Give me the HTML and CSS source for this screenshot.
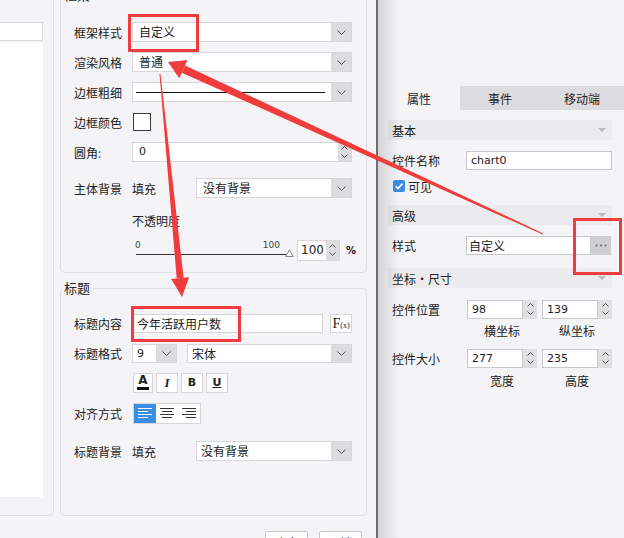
FILE: index.html
```html
<!DOCTYPE html>
<html lang="zh">
<head>
    <meta charset="UTF-8">
    <title>图表样式</title>
    <link rel="stylesheet" href="styles.css">
</head>
<body>
<div class="app">
    <div class="dialog">
        <div class="dialog-body">
            <div class="preview">
                <div class="preview-bar"></div>
                <div class="preview-canvas"></div>
            </div>
            <div class="settings">
                <div class="group group-frame">
                    <span class="legend">框架</span>
                    <div class="row">
                        <span class="lbl">框架样式</span>
                        <div class="select"><span class="val">自定义</span><i class="drop"><svg width="9" height="5" viewBox="0 0 9 5"><path d="M.5.5l4 4 4-4" fill="none" stroke="#555"/></svg></i></div>
                    </div>
                    <div class="row">
                        <span class="lbl">渲染风格</span>
                        <div class="select"><span class="val">普通</span><i class="drop"><svg width="9" height="5" viewBox="0 0 9 5"><path d="M.5.5l4 4 4-4" fill="none" stroke="#555"/></svg></i></div>
                    </div>
                    <div class="row">
                        <span class="lbl">边框粗细</span>
                        <div class="select"><span class="val line-val"><b class="line"></b></span><i class="drop"><svg width="9" height="5" viewBox="0 0 9 5"><path d="M.5.5l4 4 4-4" fill="none" stroke="#555"/></svg></i></div>
                    </div>
                    <div class="row">
                        <span class="lbl">边框颜色</span>
                        <div class="swatch"></div>
                    </div>
                    <div class="row">
                        <span class="lbl">圆角<em class="colon">:</em></span>
                        <div class="select"><span class="val num-val">0</span><i class="spin"><svg width="7" height="4" viewBox="0 0 7 4"><path d="M.5 3.5l3-3 3 3" fill="none" stroke="#555"/></svg><svg width="7" height="4" viewBox="0 0 7 4"><path d="M.5.5l3 3 3-3" fill="none" stroke="#555"/></svg></i></div>
                    </div>
                    <div class="row row-bg">
                        <span class="lbl">主体背景</span>
                        <span class="fill">填充</span>
                        <div class="select"><span class="val">没有背景</span><i class="drop"><svg width="9" height="5" viewBox="0 0 9 5"><path d="M.5.5l4 4 4-4" fill="none" stroke="#555"/></svg></i></div>
                    </div>
                    <div class="row row-sub">不透明度</div>
                    <div class="row row-sub">
                        <div class="slider">
                            <div class="scale"><span>0</span><span>100</span></div>
                            <div class="track"></div>
                            <svg class="thumb" width="9" height="8" viewBox="0 0 9 8"><path d="M4.5.8L8.3 7.5H.7z" fill="#fff" stroke="#888"/></svg>
                        </div>
                        <div class="select opacity"><span class="val num-val">100</span><i class="spin"><svg width="7" height="4" viewBox="0 0 7 4"><path d="M.5 3.5l3-3 3 3" fill="none" stroke="#555"/></svg><svg width="7" height="4" viewBox="0 0 7 4"><path d="M.5.5l3 3 3-3" fill="none" stroke="#555"/></svg></i></div>
                        <span class="pct">%</span>
                    </div>
                </div>

                <div class="group group-title">
                    <span class="legend">标题</span>
                    <div class="row">
                        <span class="lbl">标题内容</span>
                        <div class="select"><span class="val">今年活跃用户数</span></div>
                        <span class="fx">F<small>(x)</small></span>
                    </div>
                    <div class="row">
                        <span class="lbl">标题格式</span>
                        <div class="select size"><span class="val num-val">9</span><i class="drop"><svg width="9" height="5" viewBox="0 0 9 5"><path d="M.5.5l4 4 4-4" fill="none" stroke="#555"/></svg></i></div>
                        <div class="select"><span class="val">宋体</span><i class="drop"><svg width="9" height="5" viewBox="0 0 9 5"><path d="M.5.5l4 4 4-4" fill="none" stroke="#555"/></svg></i></div>
                    </div>
                    <div class="row row-sub">
                        <div class="fmt">
                            <span class="fbtn fa">A<b></b></span>
                            <span class="fbtn fi">I</span>
                            <span class="fbtn fb">B</span>
                            <span class="fbtn fu">U</span>
                        </div>
                    </div>
                    <div class="row">
                        <span class="lbl">对齐方式</span>
                        <div class="align">
                            <span class="abtn on"><svg width="14" height="11" viewBox="0 0 14 11"><path d="M0 .5h14M0 3.5h10M0 6.5h14M0 9.5h10" stroke="#fff"/></svg></span>
                            <span class="abtn"><svg width="14" height="11" viewBox="0 0 14 11"><path d="M0 .5h14M2 3.5h10M0 6.5h14M2 9.5h10" stroke="#333"/></svg></span>
                            <span class="abtn"><svg width="14" height="11" viewBox="0 0 14 11"><path d="M0 .5h14M4 3.5h10M0 6.5h14M4 9.5h10" stroke="#333"/></svg></span>
                        </div>
                    </div>
                    <div class="row row-bg row-gap">
                        <span class="lbl">标题背景</span>
                        <span class="fill">填充</span>
                        <div class="select"><span class="val">没有背景</span><i class="drop"><svg width="9" height="5" viewBox="0 0 9 5"><path d="M.5.5l4 4 4-4" fill="none" stroke="#555"/></svg></i></div>
                    </div>
                </div>
            </div>
        </div>
        <div class="dialog-foot">
            <button class="btn">确定</button>
            <button class="btn">取消</button>
        </div>
    </div>

    <div class="side">
        <div class="tabs">
            <span class="tab on">属性</span>
            <span class="tab">事件</span>
            <span class="tab last">移动端</span>
        </div>
        <div class="props">
            <div class="phead">基本<i class="caret"></i></div>
            <div class="prow">
                <span class="plabel">控件名称</span>
                <span class="pinput">chart0</span>
            </div>
            <div class="prow check-row">
                <svg width="12" height="12" viewBox="0 0 12 12"><rect width="12" height="12" rx="2" fill="#3b8de0"/><path d="M2.5 6.2l2.4 2.4 4.6-5" fill="none" stroke="#fff" stroke-width="1.6"/></svg>
                <span>可见</span>
            </div>
            <div class="phead gap">高级<i class="caret"></i></div>
            <div class="prow">
                <span class="plabel">样式</span>
                <span class="pinput cn">自定义</span>
                <span class="more"><svg width="12" height="3" viewBox="0 0 12 3"><circle cx="1.5" cy="1.5" r="1" fill="#666"/><circle cx="6" cy="1.5" r="1" fill="#666"/><circle cx="10.5" cy="1.5" r="1" fill="#666"/></svg></span>
            </div>
            <div class="phead gap">坐标・尺寸<i class="caret"></i></div>
            <div class="prow pos">
                <span class="plabel wide">控件位置</span>
                <div class="num"><span class="pinput">98</span><i class="spin"><svg width="7" height="4" viewBox="0 0 7 4"><path d="M.5 3.5l3-3 3 3" fill="none" stroke="#555"/></svg><svg width="7" height="4" viewBox="0 0 7 4"><path d="M.5.5l3 3 3-3" fill="none" stroke="#555"/></svg></i></div>
                <div class="num"><span class="pinput">139</span><i class="spin"><svg width="7" height="4" viewBox="0 0 7 4"><path d="M.5 3.5l3-3 3 3" fill="none" stroke="#555"/></svg><svg width="7" height="4" viewBox="0 0 7 4"><path d="M.5.5l3 3 3-3" fill="none" stroke="#555"/></svg></i></div>
            </div>
            <div class="caption"><span>横坐标</span><span>纵坐标</span></div>
            <div class="prow size-row">
                <span class="plabel wide">控件大小</span>
                <div class="num"><span class="pinput">277</span><i class="spin"><svg width="7" height="4" viewBox="0 0 7 4"><path d="M.5 3.5l3-3 3 3" fill="none" stroke="#555"/></svg><svg width="7" height="4" viewBox="0 0 7 4"><path d="M.5.5l3 3 3-3" fill="none" stroke="#555"/></svg></i></div>
                <div class="num"><span class="pinput">235</span><i class="spin"><svg width="7" height="4" viewBox="0 0 7 4"><path d="M.5 3.5l3-3 3 3" fill="none" stroke="#555"/></svg><svg width="7" height="4" viewBox="0 0 7 4"><path d="M.5.5l3 3 3-3" fill="none" stroke="#555"/></svg></i></div>
            </div>
            <div class="caption cap2"><span>宽度</span><span>高度</span></div>
        </div>
    </div>
</div>

<!-- annotation layer: red boxes and arrows drawn over the screenshot -->
<svg class="marks" width="624" height="538" viewBox="0 0 624 538">
    <g fill="none" stroke="#f03c3c" stroke-width="3">
        <rect x="129.5" y="15.5" width="68" height="35"/>
        <rect x="132.5" y="307.5" width="107" height="33"/>
        <rect x="574.5" y="219.5" width="46" height="54"/>
    </g>
    <g fill="#f03c3c">
        <polygon points="185.1,65.5 543.3,233.4 542.7,234.6 181.8,72.7"/>
        <polygon points="168,62 187.6,60 179.3,78.2"/>
        <polygon points="159.5,74 160.5,74 183.6,277.8 176.7,278.4"/>
        <polygon points="182,297 171.2,279 189.1,277.2"/>
    </g>
</svg>
</body>
</html>
```

FILE: styles.css
```css
* {
    box-sizing: border-box;
}

body {
    margin: 0;
    width: 624px;
    height: 538px;
    overflow: hidden;
    position: relative;
    background: #f4f4f6;
    font-family: "Noto Sans CJK SC", "Noto Sans", sans-serif;
    font-size: 12px;
    color: #222;
}

.app {
    display: flex;
    height: 538px;
}

/* dialog */
.dialog {
    flex: none;
    width: 376px;
    display: flex;
    flex-direction: column;
}

.dialog-body {
    flex: none;
    display: flex;
    height: 516px;
}

.preview {
    flex: none;
    width: 54px;
    padding-top: 22px;
    border-right: 1px solid #e0e0e4;
    border-bottom: 1px solid #e0e0e4;
    border-bottom-right-radius: 5px;
}

.preview-bar {
    width: 43px;
    height: 19px;
    background: #fff;
    border: 1px solid #d8d8dc;
    border-left: 0;
}

.preview-canvas {
    width: 43px;
    height: 454px;
    margin-top: 2px;
    background: #fff;
}

.settings {
    flex: 1;
    min-width: 0;
    display: flex;
    flex-direction: column;
    padding: 0 9px 0 6px;
}

.group {
    position: relative;
    border: 1px solid #e0e0e4;
    border-radius: 5px;
    padding: 0 14px 0 13px;
}

.group-frame {
    flex: none;
    margin-top: -5px;
    padding-top: 21px;
    padding-bottom: 7px;
}

.group-title {
    flex: 1;
    margin-top: 15px;
    padding-top: 19px;
}

.legend {
    position: absolute;
    top: -8px;
    left: 1px;
    padding: 0 2px;
    background: #f4f4f6;
    font-size: 13px;
    line-height: 14px;
}

.row {
    display: flex;
    align-items: center;
    height: 30px;
}

.row-bg {
    margin-top: 6px;
}

.row-gap {
    margin-top: 8px;
}

.row-sub {
    padding-left: 58px;
}

.group-frame .row-sub {
    margin-top: 2px;
}

.group-frame .row-sub + .row-sub {
    margin-top: 0;
}

.lbl {
    width: 58px;
    flex: none;
    white-space: nowrap;
}

.colon {
    font-style: normal;
    color: #80408a;
}

.fill {
    width: 64px;
    flex: none;
}

.select {
    flex: 1;
    min-width: 0;
    display: flex;
    height: 20px;
    background: #fff;
    border: 1px solid #d7d7db;
}

.select .val {
    flex: 1;
    padding-left: 6px;
    line-height: 18px;
    white-space: nowrap;
    overflow: hidden;
}

.num-val {
    font-family: "DejaVu Sans", sans-serif;
    font-size: 11px;
}

.line-val {
    display: flex;
    align-items: center;
    padding-left: 3px !important;
}

.line {
    flex: 1;
    height: 1px;
    margin-right: 6px;
    background: #111;
}

.drop {
    flex: none;
    width: 20px;
    display: flex;
    align-items: center;
    justify-content: center;
    background: #dcdcdf;
}

.spin {
    flex: none;
    width: 13px;
    display: flex;
    flex-direction: column;
    align-items: center;
    justify-content: space-evenly;
    background: #dcdcdf;
}

.swatch {
    width: 18px;
    height: 18px;
    margin-left: 1px;
    background: #fff;
    border: 1px solid #3a3a3a;
}

/* opacity slider */
.slider {
    flex: none;
    position: relative;
    width: 162px;
    height: 30px;
    padding-top: 4px;
}

.scale {
    display: flex;
    justify-content: space-between;
    padding: 0 14px 0 3px;
    font-family: "DejaVu Sans", sans-serif;
    font-size: 9px;
    line-height: 12px;
    color: #444;
}

.track {
    height: 1px;
    margin: 3px 4px 0 4px;
    background: #333;
}

.thumb {
    position: absolute;
    right: 0;
    top: 14px;
}

.opacity {
    flex: none;
    width: 43px;
    height: 21px;
    margin-left: 3px;
}

.opacity .val {
    padding-left: 3px;
    line-height: 19px;
    font-size: 12px;
}

.pct {
    margin-left: 6px;
    font-family: "DejaVu Sans", sans-serif;
    font-size: 10px;
    font-weight: bold;
}

/* title group */
.group-title .select {
    height: 19px;
}

.group-title .select .val {
    line-height: 17px;
    padding-left: 4px;
}

.group-title .row-bg .select {
    height: 20px;
}

.fx {
    flex: none;
    width: 22px;
    height: 19px;
    margin-left: 7px;
    background: #fff;
    border: 1px solid #d7d7db;
    font-family: "Liberation Serif", serif;
    font-size: 14px;
    line-height: 17px;
    text-align: center;
    color: #222;
}

.fx small {
    font-size: 8px;
}

.size {
    flex: none;
    width: 45px;
    margin-right: 10px;
}

.fmt {
    display: flex;
    gap: 3px;
    margin-left: 1px;
}

.fbtn {
    width: 22px;
    height: 20px;
    background: #fff;
    border: 1px solid #d4d4d8;
    text-align: center;
    line-height: 18px;
    color: #222;
}

.fa {
    width: 20px;
    position: relative;
    font-family: "DejaVu Sans", sans-serif;
    font-weight: bold;
    font-size: 12px;
    line-height: 13px;
}

.fa b {
    position: absolute;
    left: 3px;
    right: 3px;
    bottom: 2px;
    height: 3px;
    background: #111;
}

.fi {
    font-family: "Liberation Serif", serif;
    font-style: italic;
    font-weight: bold;
    font-size: 13px;
}

.fb {
    font-family: "DejaVu Sans", sans-serif;
    font-weight: bold;
    font-size: 11px;
}

.fu {
    font-family: "DejaVu Sans", sans-serif;
    font-weight: bold;
    font-size: 11px;
    text-decoration: underline;
}

.align {
    display: flex;
    margin-left: 1px;
    border: 1px solid #d4d4d8;
    background: #fff;
}

.abtn {
    width: 22px;
    height: 19px;
    display: flex;
    align-items: center;
    justify-content: center;
}

.abtn.on {
    background: #3a8ee6;
}

.dialog-foot {
    flex: none;
    display: flex;
    justify-content: flex-end;
    gap: 11px;
    padding: 15px 14px 0 0;
}

.btn {
    width: 43px;
    height: 22px;
    padding: 0;
    background: #fff;
    border: 1px solid #c8c8cc;
    border-radius: 2px;
    font-family: inherit;
    font-size: 12px;
    color: #222;
}

/* right property panel */
.side {
    flex: 1;
    min-width: 0;
    position: relative;
    padding-top: 86px;
    border-left: 2px solid #6e6e70;
}

.side::before {
    content: "";
    position: absolute;
    top: 0;
    bottom: 0;
    left: 0;
    width: 22px;
    background: linear-gradient(to right, rgba(0, 0, 0, 0.13), rgba(0, 0, 0, 0));
    pointer-events: none;
}

.tabs {
    display: flex;
    height: 24px;
}

.tab {
    flex: none;
    width: 80px;
    display: flex;
    align-items: center;
    justify-content: center;
    background: #dcdcdf;
    font-size: 12px;
}

.tab.on {
    width: 82px;
    background: #f4f4f6;
}

.tab.last {
    flex: 1;
}

.props {
    padding: 0 12px 0 10px;
}

.phead {
    display: flex;
    align-items: center;
    justify-content: space-between;
    height: 20px;
    margin-top: 10px;
    padding: 0 6px 0 4px;
    background: #ebebed;
    color: #222;
}

.phead.gap {
    margin-top: 8px;
}

.caret {
    width: 0;
    height: 0;
    border-left: 4px solid transparent;
    border-right: 4px solid transparent;
    border-top: 4px solid #b9b9bc;
}

.prow {
    display: flex;
    align-items: center;
    height: 30px;
    margin-top: 5px;
}

.check-row {
    height: 22px;
    margin-top: 0;
    padding-left: 5px;
    gap: 3px;
}

.plabel {
    width: 78px;
    flex: none;
    padding-left: 4px;
}

.plabel.wide {
    width: 79px;
}

.pinput {
    flex: 1;
    min-width: 0;
    height: 19px;
    padding-left: 4px;
    background: #fff;
    border: 1px solid #c8c8cc;
    font-family: "DejaVu Sans", sans-serif;
    font-size: 11px;
    line-height: 17px;
    color: #1c1c2c;
}

.pinput.cn {
    font-family: inherit;
    font-size: 12px;
    padding-left: 2px;
}

.more {
    flex: none;
    width: 20px;
    height: 19px;
    margin-right: 1px;
    display: flex;
    align-items: center;
    justify-content: center;
    background: #cfcfd2;
}

.pos {
    margin-top: 6px;
}

.num {
    flex: none;
    width: 70px;
    display: flex;
    height: 19px;
}

.num + .num {
    margin-left: 5px;
}

.num .spin {
    width: 14px;
    background: #e0e0e3;
}

.caption {
    display: flex;
    gap: 5px;
    height: 14px;
    padding-left: 79px;
    line-height: 14px;
}

.caption span {
    width: 70px;
    text-align: center;
}

.cap2 {
    height: 16px;
    line-height: 16px;
}

.marks {
    position: absolute;
    top: 0;
    left: 0;
    pointer-events: none;
}
```
